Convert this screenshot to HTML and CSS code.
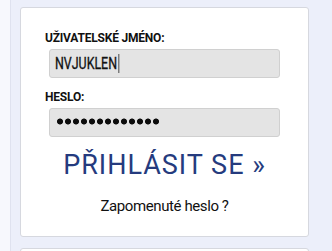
FILE: index.html
```html
<!DOCTYPE html>
<html>
<head>
<meta charset="utf-8">
<link rel="stylesheet" href="styles.css">
</head>
<body>
<div class="page">
  <div class="strip"></div>
  <div class="main">
    <div class="card">
      <div class="label">UŽIVATELSKÉ JMÉNO:</div>
      <div class="field"><span class="value">NVJUKLEN</span></div>
      <div class="label label-pass">HESLO:</div>
      <div class="field field-pass"><span class="dots" aria-label="heslo"></span></div>
      <div class="login">PŘIHLÁSIT SE »</div>
      <div class="forgot">Zapomenuté heslo ?</div>
    </div>
    <div class="card card-next"></div>
  </div>
</div>
</body>
</html>
```
FILE: styles.css
```css
html, body {
  margin: 0;
  padding: 0;
}
body {
  background: #eceffa;
  font-family: Roboto, "Liberation Sans", sans-serif;
  width: 332px;
  height: 251px;
  overflow: hidden;
}
.page {
  display: flex;
  height: 251px;
}
.strip {
  width: 10px;
  flex: none;
  background: #f7f8fd;
  border-right: 1px solid #dfe2ef;
}
.main {
  padding: 7px 0 0 9px;
}
.card {
  width: 287px;
  background: #fff;
  border: 1px solid #d6d8df;
  border-radius: 3px;
  padding: 23px 0 21px 0;
}
.label {
  font-weight: bold;
  font-size: 12px;
  line-height: 14px;
  letter-spacing: -0.2px;
  color: #111;
  margin-left: 24px;
}
.field {
  margin: 4px 28px 0 28px;
  height: 27px;
  background: #e4e4e4;
  border: 1px solid #d0d0d0;
  border-radius: 3px;
  display: flex;
  align-items: center;
  padding-left: 6px;
}
.value {
  position: relative;
  display: inline-block;
  font-size: 17px;
  line-height: 19px;
  color: #111;
  -webkit-text-stroke: 0.35px #111;
  transform: scaleX(0.73);
  transform-origin: left center;
  margin-left: -1px;
}
.value::after {
  content: "";
  position: absolute;
  top: 0;
  right: -3px;
  width: 1.37px;
  height: 19px;
  background: #111;
}
.label-pass {
  margin-top: 12px;
}
.dots {
  display: block;
  width: 104px;
  height: 7px;
  margin-top: -3px;
  background: radial-gradient(circle, #0c0c0c 2.6px, rgba(12, 12, 12, 0) 3.4px) 0 0 / 8px 7px repeat-x;
}
.login {
  text-align: center;
  font-size: 27px;
  line-height: 32px;
  letter-spacing: 1px;
  color: #253b7e;
  margin-top: 12px;
}
.forgot {
  text-align: center;
  font-size: 15px;
  line-height: 18px;
  letter-spacing: -0.4px;
  color: #111;
  margin-top: 16px;
}
.card-next {
  margin-top: 11px;
  height: 40px;
  padding: 0;
}
```
